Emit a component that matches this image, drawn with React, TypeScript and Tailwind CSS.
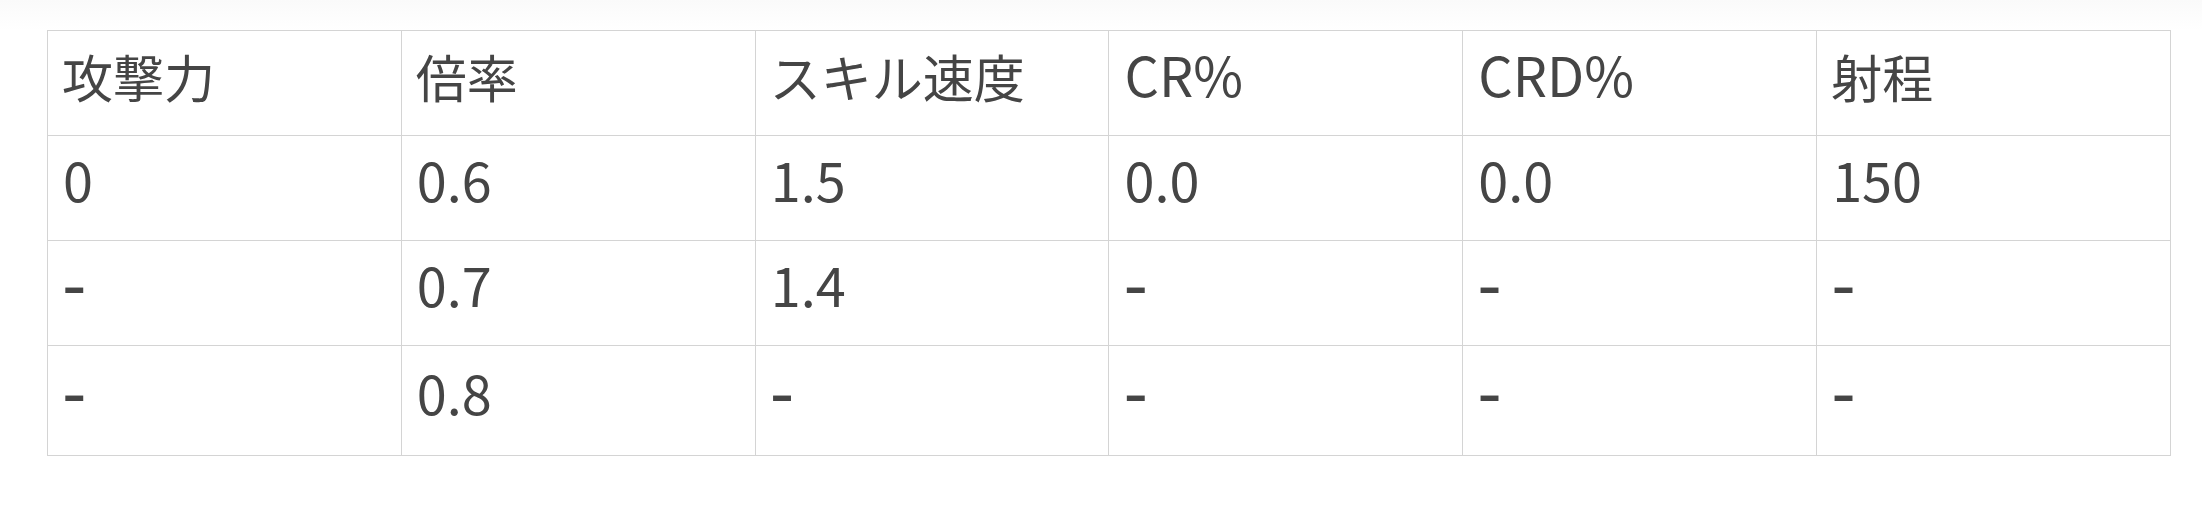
import React from "react";

const headers = ["攻撃力", "倍率", "スキル速度", "CR%", "CRD%", "射程"];
const rows = [
  ["0", "0.6", "1.5", "0.0", "0.0", "150"],
  ["-", "0.7", "1.4", "-", "-", "-"],
  ["-", "0.8", "-", "-", "-", "-"],
];

const cjk = /[\u3000-\u9fff]/;

function Cell({ text }: { text: string }) {
  if (text === "-") {
    return (
      <td className="border border-[#d4d4d4] pl-[14px] pb-[14px] align-middle">
        <span
          className="inline-block text-[68px] leading-none"
          style={{ fontFamily: '"DejaVu Sans", sans-serif' }}
        >
          {text}
        </span>
      </td>
    );
  }
  if (cjk.test(text)) {
    return (
      <td className="border border-[#d4d4d4] pl-[14px] pb-[12px] align-middle">
        <span className="inline-block text-[51px] leading-none">{text}</span>
      </td>
    );
  }
  return (
    <td className="border border-[#d4d4d4] pl-[15px] pb-[17px] align-middle">
      <span className="inline-block text-[54px] leading-none">{text}</span>
    </td>
  );
}

export default function App() {
  return (
    <div className="w-[2202px] h-[505px] bg-linear-to-b from-[#fafafa] to-white to-[6%] pt-[30px] pl-[47px]">
      <table
        className="table-fixed border-collapse w-[2124px] bg-white text-[#454545]"
        style={{ fontFamily: '"Noto Sans CJK JP", "Noto Sans", sans-serif' }}
      >
        <tbody>
          <tr className="h-[105px]">
            {headers.map((h, i) => (
              <Cell key={i} text={h} />
            ))}
          </tr>
          {rows.map((r, ri) => (
            <tr key={ri} className={ri === 2 ? "h-[110px]" : "h-[105px]"}>
              {r.map((c, ci) => (
                <Cell key={ci} text={c} />
              ))}
            </tr>
          ))}
        </tbody>
      </table>
    </div>
  );
}
